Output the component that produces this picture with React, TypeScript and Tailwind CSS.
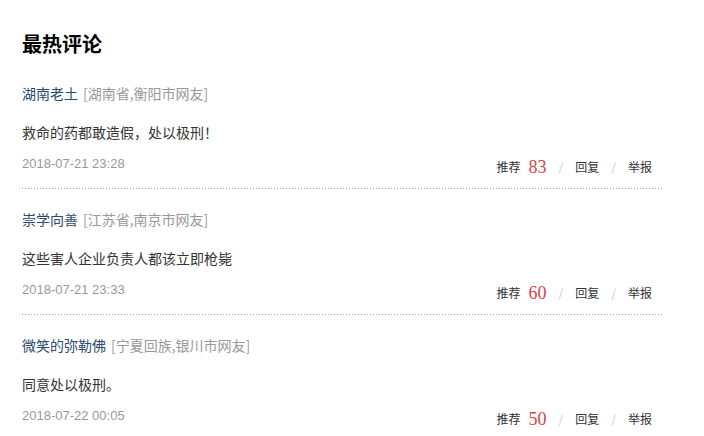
const comments = [
  {
    name: '湖南老土',
    place: '[湖南省,衡阳市网友]',
    text: '救命的药都敢造假，处以极刑！',
    time: '2018-07-21 23:28',
    votes: 83,
  },
  {
    name: '崇学向善',
    place: '[江苏省,南京市网友]',
    text: '这些害人企业负责人都该立即枪毙',
    time: '2018-07-21 23:33',
    votes: 60,
  },
  {
    name: '微笑的弥勒佛',
    place: '[宁夏回族,银川市网友]',
    text: '同意处以极刑。',
    time: '2018-07-22 00:05',
    votes: 50,
  },
]

export default function App() {
  return (
    <div
      className="w-[704px] h-[436px] overflow-hidden bg-white pl-[22px] pt-[30px]"
      style={{ fontFamily: '"Noto Sans CJK SC", "Liberation Sans", sans-serif' }}
    >
      <h2 className="text-[20px] leading-[28px] font-bold text-black">最热评论</h2>

      <div className="w-[640px] mt-[5px]">
        {comments.map((c) => (
          <div key={c.name}>
            <div className="pt-[20px] pb-[12px]">
              {/* Author */}
              <div className="h-[20px] flex items-center text-[14px] leading-[20px]">
                <span className="text-[#2c4a6e]">{c.name}</span>
                <span className="ml-[5px] text-[#999]">{c.place}</span>
              </div>

              {/* Body */}
              <p className="mt-[19px] h-[20px] text-[14px] leading-[20px] text-[#333]">{c.text}</p>

              {/* Footer */}
              <div className="mt-[10px] h-[24px] flex items-center justify-between">
                <span className="text-[13px] text-[#999]" style={{ fontFamily: '"Liberation Sans", sans-serif' }}>
                  {c.time}
                </span>
                <div className="mt-[6px] mr-[10px] flex items-center text-[12px] text-[#333]">
                  <span>推荐</span>
                  <span className="ml-[8px] text-[18px] leading-[20px] text-[#d8424a] font-['Liberation_Serif',serif]">
                    {c.votes}
                  </span>
                  <span className="mx-[12px] text-[#ccc]">/</span>
                  <span>回复</span>
                  <span className="mx-[12px] text-[#ccc]">/</span>
                  <span>举报</span>
                </div>
              </div>
            </div>
            <div className="h-px bg-[linear-gradient(to_right,#a0a0a0_1px,transparent_1px)] bg-[length:3px_1px]" />
          </div>
        ))}
      </div>
    </div>
  )
}
